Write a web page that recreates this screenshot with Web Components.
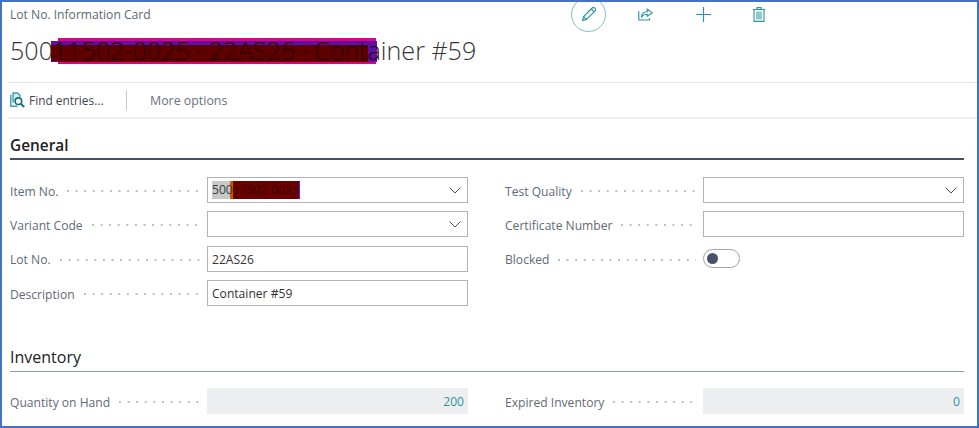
<!DOCTYPE html>
<html>
<head>
<meta charset="utf-8">
<title>Lot No. Information Card</title>
<style>
  html, body { margin: 0; padding: 0; background: #fff; }
  body { font-family: "Open Sans", "Noto Sans", sans-serif; }
</style>
</head>
<body>

<lot-card>
  <card-head slot="head"></card-head>
  <form-section title="General" heavy>
    <div class="column">
      <form-field label="Item No."><value-box dropdown><redact-item><span style="color:#3c3c3c">500</span>11502-0025</redact-item></value-box></form-field>
      <form-field label="Variant Code"><value-box dropdown></value-box></form-field>
      <form-field label="Lot No."><value-box>22AS26</value-box></form-field>
      <form-field label="Description"><value-box>Container #59</value-box></form-field>
    </div>
    <div class="column">
      <form-field label="Test Quality"><value-box dropdown></value-box></form-field>
      <form-field label="Certificate Number"><value-box></value-box></form-field>
      <form-field label="Blocked"><toggle-switch></toggle-switch></form-field>
    </div>
  </form-section>
  <form-section title="Inventory" style="margin-top:25px">
    <div class="column">
      <form-field label="Quantity on Hand"><value-box readonly>200</value-box></form-field>
    </div>
    <div class="column">
      <form-field label="Expired Inventory"><value-box readonly>0</value-box></form-field>
    </div>
  </form-section>
</lot-card>

<script>
class LotCard extends HTMLElement {
    constructor() {
        super();
        this.attachShadow({ mode: 'open' });
    }

    connectedCallback() {
        this.shadowRoot.innerHTML = `
            <style>
                :host {
                    display: block;
                    box-sizing: border-box;
                    width: 979px;
                    height: 428px;
                    border: 2px solid #4472c4;
                    overflow: hidden;
                    background: #fff;
                }
                .body { padding: 0 13px 0 8px; }
            </style>
            <slot name="head"></slot>
            <div class="body"><slot></slot></div>
        `;
    }
}

class CardHead extends HTMLElement {
    constructor() {
        super();
        this.attachShadow({ mode: 'open' });
    }

    connectedCallback() {
        this.shadowRoot.innerHTML = `
            <style>
                :host { display: block; padding-left: 7px; color: #333; }
                .top { display: flex; height: 26px; align-items: center; }
                .caption { width: 562px; margin-top: -2px; padding-left: 1px; box-sizing: border-box; font-size: 12.1px; color: #5d6875; }
                .actions { display: flex; align-items: center; margin-top: -2px; }
                .pencil {
                    width: 35px; height: 35px; box-sizing: border-box;
                    border: 1px solid #7cc0c6; border-radius: 50%;
                    display: flex; align-items: center; justify-content: center;
                }
                .act { display: flex; justify-content: center; width: 20px; }
                .act.share { margin-left: 29px; }
                .act.plus { margin-left: 38px; }
                .act.trash { margin-left: 36px; }
                svg { display: block; fill: none; stroke: #2b939b; }
                .title-row { height: 55px; box-sizing: border-box; padding: 0 0 11px 1px; display: flex; align-items: center; border-bottom: 1px solid #e3e3e3; }
                h1 { position: relative; margin: 0; font-size: 25.1px; font-weight: 300; color: #333; white-space: nowrap; line-height: 48px; }
                .mark { position: absolute; }
                .m1 { left: 48px; width: 318px; top: 12px; height: 26px; background: #e6007e; }
                .m2 { left: 41px; width: 326px; top: 15px; height: 21px; background: #5b10a6; }
                .m3 { left: 41px; width: 317px; top: 19px; height: 16px; background: #5e0000; }
                .m3b { left: 48px; width: 310px; top: 35px; height: 1px; background: #5e0000; }
                h1 span.t { position: relative; }
                h1 span.hid { color: #2b0000; }
                .bar { display: flex; align-items: center; height: 34px; border-bottom: 2px solid #efefef; box-sizing: content-box; padding-left: 1px; font-size: 12.4px; }
                .find { display: flex; align-items: center; gap: 4px; width: 116px; color: #3f4650; font-size: 11.9px; }
                .sep { width: 1px; height: 21px; background: #c9ced4; margin-right: 23px; }
                .more { color: #68727e; }
            </style>
            <div class="top">
                <div class="caption">Lot No. Information Card</div>
                <div class="actions">
                    <div class="pencil">
                        <svg width="16" height="16" viewBox="0 0 16 16" stroke-width="1.1">
                            <path d="M1.6 14.4 L2.6 10.6 L11.2 2 Q12.4 0.9 13.6 2 L14.2 2.6 Q15.2 3.8 14.1 4.9 L5.4 13.4 Z"/>
                            <path d="M10.2 3 L13.1 5.9 M2.6 10.6 L5.4 13.4"/>
                        </svg>
                    </div>
                    <div class="act share">
                        <svg width="15" height="14" viewBox="0 0 15 14" stroke-width="1.1">
                            <path d="M0.8 4.2 V13 H11.5 V11"/>
                            <path d="M3.5 9.8 C3.8 6.4 6.2 4.8 9.2 4.8 V2 L14.3 5.9 L9.2 9.3 V7.2 C7 7.1 5.2 7.9 3.5 9.8 Z"/>
                        </svg>
                    </div>
                    <div class="act plus">
                        <svg width="15" height="15" viewBox="0 0 15 15" stroke-width="1.2">
                            <path d="M7.5 0 V15 M0 7.5 H15"/>
                        </svg>
                    </div>
                    <div class="act trash">
                        <svg width="12" height="15" viewBox="0 0 12 15" stroke-width="1.1">
                            <path d="M0 2.5 H12 M1 2.5 V14.4 H11 V2.5 M4 2.5 V0.6 H8 V2.5"/>
                            <rect x="3" y="4.5" width="6" height="8" fill="#8fc7cb" stroke="none"/>
                        </svg>
                    </div>
                </div>
            </div>
            <div class="title-row">
                <h1>
                    <i class="mark m1"></i><i class="mark m2"></i><i class="mark m3"></i><i class="mark m3b"></i>
                    <span class="t">500<span class="hid">11502-0025 · 22AS26 · Conta</span>iner #59</span>
                </h1>
            </div>
            <div class="bar">
                <div class="find">
                    <svg width="15" height="16" viewBox="0 0 15 16" stroke-width="1.4">
                        <path d="M0.8 2.8 V14.2 H7.5" stroke="#3aa3aa"/>
                        <path d="M3 10.5 V1 H7.5 L10 3.4 V5" fill="#d3ecee" stroke="#3aa3aa"/>
                        <circle cx="8.4" cy="9.2" r="3.3" fill="#fff" stroke="#17707a" stroke-width="1.6"/>
                        <path d="M10.8 11.6 L14.2 15" stroke="#17707a" stroke-width="2"/>
                    </svg>
                    <span>Find entries...</span>
                </div>
                <div class="sep"></div>
                <div class="more">More options</div>
            </div>
        `;
    }
}

class FormSection extends HTMLElement {
    constructor() {
        super();
        this.attachShadow({ mode: 'open' });
    }

    connectedCallback() {
        const title = this.getAttribute('title');
        const heavy = this.hasAttribute('heavy');

        this.shadowRoot.innerHTML = `
            <style>
                :host { display: block; }
                h2 {
                    margin: 0;
                    height: 41px;
                    box-sizing: border-box;
                    padding-top: ${heavy ? 16 : 15}px;
                    font-size: ${heavy ? 15.4 : 16}px;
                    line-height: 22px;
                    font-weight: ${heavy ? 600 : 500};
                    color: #212121;
                    border-bottom: ${heavy ? '2px solid #444f63' : '1px solid #8d99b0'};
                }
                .grid {
                    display: grid;
                    grid-template-columns: 458px 459px;
                    column-gap: 37px;
                    padding-top: ${heavy ? 17 : 16}px;
                }
                ::slotted(.column) {
                    display: flex;
                    flex-direction: column;
                    gap: 8.4px;
                }
            </style>
            <h2>${title}</h2>
            <div class="grid"><slot></slot></div>
        `;
        this.removeAttribute('title');
    }
}

class FormField extends HTMLElement {
    constructor() {
        super();
        this.attachShadow({ mode: 'open' });
    }

    connectedCallback() {
        const label = this.getAttribute('label');

        this.shadowRoot.innerHTML = `
            <style>
                :host {
                    display: grid;
                    grid-template-columns: 1fr 261px;
                    align-items: center;
                    height: 26px;
                    font-size: 12.1px;
                }
                .name { display: flex; align-items: center; color: #5f6a77; padding-top: 2px; }
                .dots {
                    flex: 1;
                    height: 2px;
                    margin: 0 7px 0 9px;
                    background: radial-gradient(circle at 1px 1px, #b9bec5 0.8px, transparent 1px) 0 0 / 8.6px 2px repeat-x;
                }
            </style>
            <div class="name"><span>${label}</span><span class="dots"></span></div>
            <slot></slot>
        `;
    }
}

class ValueBox extends HTMLElement {
    constructor() {
        super();
        this.attachShadow({ mode: 'open' });
    }

    connectedCallback() {
        const readonly = this.hasAttribute('readonly');
        const chevron = this.hasAttribute('dropdown') ? `
            <svg width="12" height="7" viewBox="0 0 12 7" fill="none" stroke="#4d5560" stroke-width="1">
                <path d="M0.5 0.5 L6 6 L11.5 0.5"/>
            </svg>` : '';

        this.shadowRoot.innerHTML = `
            <style>
                :host {
                    display: flex;
                    align-items: center;
                    box-sizing: border-box;
                    height: 26px;
                    padding: 1px 6px 0 4px;
                    border: 1px solid ${readonly ? '#edeef0' : '#aeb3bd'};
                    background: ${readonly ? '#edeef0' : '#fff'};
                    color: ${readonly ? '#33909e' : '#333'};
                    justify-content: ${readonly ? 'flex-end' : 'flex-start'};
                    ${readonly ? 'padding-right: 3px;' : ''}
                }
                svg { margin-left: auto; margin-top: -1px; display: block; }
            </style>
            <slot></slot>${chevron}
        `;
    }
}

class RedactItem extends HTMLElement {
    constructor() {
        super();
        this.attachShadow({ mode: 'open' });
    }

    connectedCallback() {
        this.shadowRoot.innerHTML = `
            <style>
                :host {
                    display: inline-block;
                    height: 18px;
                    line-height: 18px;
                    margin-top: -1px;
                    width: 88px;
                    white-space: nowrap;
                    color: #3a0000;
                    background: linear-gradient(to right,
                        #c8c8c8 0 18px, #c85a00 18px 21px, #6b0000 21px 87px, #6a18c0 87px 88px);
                }
            </style>
            <slot></slot>
        `;
    }
}

class ToggleSwitch extends HTMLElement {
    constructor() {
        super();
        this.attachShadow({ mode: 'open' });
    }

    connectedCallback() {
        this.shadowRoot.innerHTML = `
            <style>
                :host {
                    display: flex;
                    align-items: center;
                    box-sizing: border-box;
                    width: 37px;
                    height: 19px;
                    padding-left: 3px;
                    border: 1px solid #9ea3ae;
                    border-radius: 10px;
                    background: #fff;
                }
                i { display: block; width: 11px; height: 11px; border-radius: 50%; background: #46536a; }
            </style>
            <i></i>
        `;
    }
}

customElements.define('lot-card', LotCard);
customElements.define('card-head', CardHead);
customElements.define('form-section', FormSection);
customElements.define('form-field', FormField);
customElements.define('value-box', ValueBox);
customElements.define('redact-item', RedactItem);
customElements.define('toggle-switch', ToggleSwitch);
</script>
</body>
</html>
